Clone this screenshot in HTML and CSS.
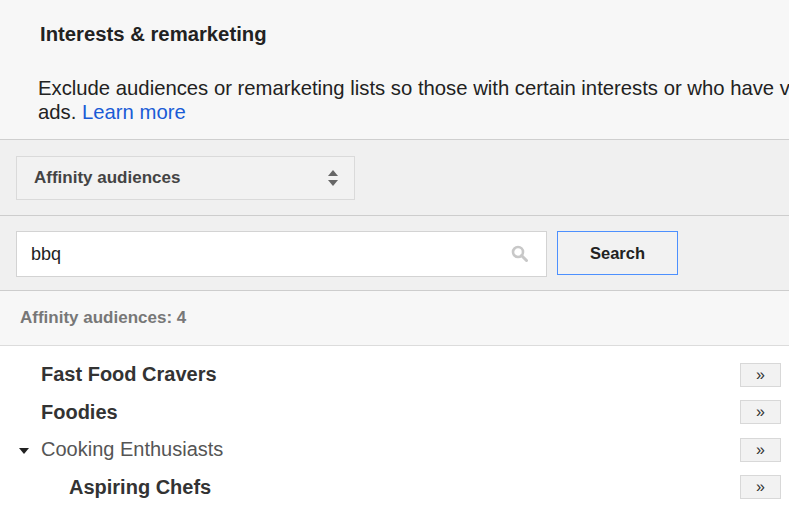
FILE: index.html
```html
<!DOCTYPE html>
<html lang="en">
<head>
    <meta charset="UTF-8">
    <title>Interests &amp; remarketing</title>
    <link rel="stylesheet" href="styles.css">
</head>
<body>
    <section class="intro">
        <h2>Interests &amp; remarketing</h2>
        <p>Exclude audiences or remarketing lists so those with certain interests or who have visited your website won't see your<br>
        ads. <a href="#">Learn more</a></p>
    </section>

    <section class="bar">
        <div class="picker">
            <span>Affinity audiences</span>
            <svg width="12" height="20" viewBox="0 0 12 20">
                <path d="M6 2 L11 8 L1 8 Z" fill="#666"/>
                <path d="M1 12 L11 12 L6 18 Z" fill="#666"/>
            </svg>
        </div>
    </section>

    <section class="bar search-bar">
        <div class="search-box">
            <input type="text" value="bbq">
            <svg class="mag" width="18" height="18" viewBox="0 0 18 18">
                <circle cx="7" cy="7" r="5" fill="none" stroke="#c8c8c8" stroke-width="2.6"/>
                <path d="M10.5 10.5 L15.5 15.5" stroke="#c8c8c8" stroke-width="3" stroke-linecap="round"/>
            </svg>
        </div>
        <button class="search-btn">Search</button>
    </section>

    <div class="count">Affinity audiences: 4</div>

    <ul class="results">
        <li><span class="name">Fast Food Cravers</span><button class="add">&raquo;</button></li>
        <li><span class="name">Foodies</span><button class="add">&raquo;</button></li>
        <li class="parent"><span class="caret"></span><span class="name">Cooking Enthusiasts</span><button class="add">&raquo;</button></li>
        <li class="child"><span class="name">Aspiring Chefs</span><button class="add">&raquo;</button></li>
    </ul>
</body>
</html>
```

FILE: styles.css
```css
body, html {
    margin: 0;
    padding: 0;
    font-family: 'Liberation Sans', Arial, sans-serif;
    color: #333;
    background: #fff;
    overflow: hidden;
}

.intro {
    background-color: #f7f7f7;
    border-bottom: 1px solid #cfcfcf;
    height: 140px;
    box-sizing: border-box;
    padding: 22px 0 0 38px;
    overflow: hidden;
}
.intro h2 {
    margin: 0 0 0 2px;
    font-size: 20.3px;
    line-height: 24px;
    color: #222;
}
.intro p {
    margin: 30px 0 0;
    font-size: 20.3px;
    line-height: 24px;
    color: #222;
    white-space: nowrap;
}
.intro a {
    color: #1a5bd6;
    text-decoration: none;
}

.bar {
    background-color: #f0f0f0;
    border-bottom: 1px solid #cdcdcd;
    padding: 16px 16px 15px;
    display: flex;
    align-items: flex-start;
}
.picker {
    height: 42px;
    border: 1px solid #dadada;
    background: #f2f2f2;
    display: flex;
    align-items: center;
    justify-content: space-between;
    padding: 0 15px 0 17px;
    width: 305px;
    font-size: 17px;
    font-weight: bold;
    color: #444;
}

.search-bar {
    padding-top: 15px;
    padding-bottom: 13px;
}
.search-box {
    position: relative;
    width: 529px;
    height: 44px;
    border: 1px solid #d3d3d3;
    background: #fff;
}
.search-box input {
    border: none;
    outline: none;
    background: transparent;
    width: 100%;
    height: 44px;
    box-sizing: border-box;
    padding: 0 40px 0 14px;
    font-family: 'Liberation Sans', Arial, sans-serif;
    font-size: 18px;
    color: #222;
}
.mag {
    position: absolute;
    right: 17px;
    top: 13px;
}
.search-btn {
    margin-left: 10px;
    width: 121px;
    height: 44px;
    border: 1px solid #4d90fe;
    background: #f2f2f2;
    font-family: 'Liberation Sans', Arial, sans-serif;
    font-size: 16.5px;
    font-weight: bold;
    color: #222;
}

.count {
    background-color: #f7f7f7;
    border-bottom: 1px solid #dcdcdc;
    height: 54px;
    line-height: 54px;
    padding-left: 20px;
    font-size: 17px;
    font-weight: bold;
    color: #777;
}

.results {
    list-style: none;
    margin: 0;
    padding: 10px 8px 0 0;
}
.results li {
    display: flex;
    align-items: center;
    height: 37.5px;
    padding-left: 41px;
    position: relative;
}
.results .name {
    flex: 1;
    font-size: 20px;
    font-weight: bold;
    color: #333;
}
.results .parent .name {
    font-weight: normal;
    color: #555;
}
.results .child {
    padding-left: 69px;
}
.caret {
    position: absolute;
    left: 19px;
    top: 17px;
    border-left: 5px solid transparent;
    border-right: 5px solid transparent;
    border-top: 6px solid #222;
}
.add {
    width: 41px;
    height: 24px;
    border: 1px solid #d8d8d8;
    background: #f2f2f2;
    font-family: 'Liberation Sans', Arial, sans-serif;
    font-size: 16px;
    line-height: 18px;
    color: #333;
    padding: 0;
}
```
